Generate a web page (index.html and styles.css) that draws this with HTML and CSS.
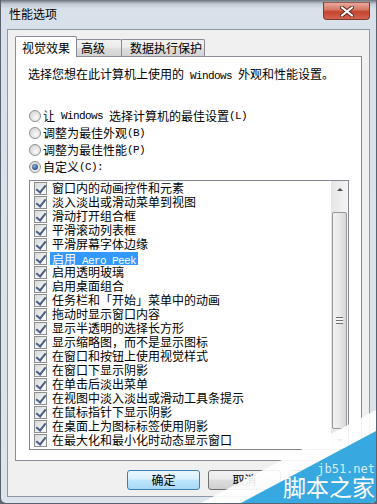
FILE: index.html
```html
<!DOCTYPE html>
<html lang="zh-CN">
<head>
    <meta charset="UTF-8">
    <meta name="viewport" content="width=device-width, initial-scale=1.0">
    <title>性能选项</title>
    <link rel="stylesheet" href="styles.css">
</head>
<body>
    <div class="window">
        <div class="titlebar">
            <span class="title">性能选项</span>
            <button class="close">
                <svg width="14" height="11" viewBox="0 0 14 11">
                    <path d="M2 1.5 L12 9.5 M12 1.5 L2 9.5" stroke="#5a2a22" stroke-width="4" stroke-linecap="round"/>
                    <path d="M2 1.5 L12 9.5 M12 1.5 L2 9.5" stroke="#fff" stroke-width="2.2" stroke-linecap="round"/>
                </svg>
            </button>
        </div>

        <div class="client">
            <div class="tabs">
                <div class="tab active">视觉效果</div>
                <div class="tab tab-adv">高级</div>
                <div class="tab tab-dep">数据执行保护</div>
            </div>

            <div class="panel">
                <p class="intro">选择您想在此计算机上使用的<span class="latin"> Windows </span>外观和性能设置。</p>

                <div class="radios">
                    <div class="radio"><span class="dot"></span>让<span class="latin"> Windows </span>选择计算机的最佳设置<span class="latin">(L)</span></div>
                    <div class="radio"><span class="dot"></span>调整为最佳外观<span class="latin">(B)</span></div>
                    <div class="radio"><span class="dot"></span>调整为最佳性能<span class="latin">(P)</span></div>
                    <div class="radio"><span class="dot on"></span>自定义<span class="latin">(C):</span></div>
                </div>

                <div class="listbox">
                    <ul class="items">
                        <li><span class="check"></span>窗口内的动画控件和元素</li>
                        <li><span class="check"></span>淡入淡出或滑动菜单到视图</li>
                        <li><span class="check"></span>滑动打开组合框</li>
                        <li><span class="check"></span>平滑滚动列表框</li>
                        <li><span class="check"></span>平滑屏幕字体边缘</li>
                        <li><span class="check"></span><span class="sel">启用<span class="latin"> Aero Peek</span></span></li>
                        <li><span class="check"></span>启用透明玻璃</li>
                        <li><span class="check"></span>启用桌面组合</li>
                        <li><span class="check"></span>任务栏和「开始」菜单中的动画</li>
                        <li><span class="check"></span>拖动时显示窗口内容</li>
                        <li><span class="check"></span>显示半透明的选择长方形</li>
                        <li><span class="check"></span>显示缩略图，而不是显示图标</li>
                        <li><span class="check"></span>在窗口和按钮上使用视觉样式</li>
                        <li><span class="check"></span>在窗口下显示阴影</li>
                        <li><span class="check"></span>在单击后淡出菜单</li>
                        <li><span class="check"></span>在视图中淡入淡出或滑动工具条提示</li>
                        <li><span class="check"></span>在鼠标指针下显示阴影</li>
                        <li><span class="check"></span>在桌面上为图标标签使用阴影</li>
                        <li><span class="check"></span>在最大化和最小化时动态显示窗口</li>
                    </ul>
                    <div class="scrollbar">
                        <div class="sb-btn"><span class="arrow-up"></span></div>
                        <div class="sb-gap"></div>
                        <div class="thumb"><span class="grip"></span></div>
                        <div class="sb-gap2"></div>
                        <div class="sb-btn"><span class="arrow-down"></span></div>
                    </div>
                </div>
            </div>

            <div class="buttons">
                <button class="btn default">确定</button>
                <button class="btn">取消</button>
                <!-- third button is hidden under the watermark -->
                <button class="btn"></button>
            </div>
        </div>

        <!-- site watermark in the corner -->
        <div class="watermark">
            <svg class="wm-bg" width="187" height="104" viewBox="0 0 187 104">
                <polygon points="187,9 187,104 8,104" fill="#fff" fill-opacity="0.9"/>
                <polygon points="187,30 187,104 48,104" fill="#38a8e0"/>
            </svg>
            <span class="wm-site">jb51.net</span>
            <span class="wm-name">脚本之家</span>
        </div>
    </div>
</body>
</html>
```

FILE: styles.css
```css
* {
    box-sizing: border-box;
}
body {
    margin: 0;
    font-family: "Noto Sans CJK SC", sans-serif;
    font-size: 12px;
    color: #000;
    background: #5d6772;
}
.latin {
    font-family: "Liberation Mono", monospace;
    font-size: 11px;
    letter-spacing: -0.6px;
    white-space: pre;
}
.window {
    position: relative;
    width: 377px;
    height: 504px;
    display: flex;
    flex-direction: column;
    padding: 0 6px 6px;
    background: linear-gradient(#6c737b, #c3ccd5 4px, #d8e1ea 9px, #dde4eb);
    border: 1px solid #5a636d;
    border-top: none;
    border-radius: 0 0 6px 6px;
    overflow: hidden;
}
.titlebar {
    height: 29px;
    display: flex;
    align-items: flex-start;
}
.title {
    margin: 6px 0 0 2px;
    line-height: 16px;
}
.close {
    margin: 2px 0 0 auto;
    width: 47px;
    height: 18px;
    padding: 0;
    border: 1px solid #7a3a30;
    border-top-color: #9a5a50;
    border-radius: 0 0 4px 4px;
    background: linear-gradient(#e9a99c, #d77a68 40%, #c5452f 55%, #d2634f);
    display: flex;
    align-items: center;
    justify-content: center;
}
.client {
    flex: 1;
    display: flex;
    flex-direction: column;
    padding: 6px 7px 0;
    background: #f0f0f0;
    border: 1px solid #8d99a5;
}
.tabs {
    height: 20px;
    display: flex;
    align-items: flex-end;
    position: relative;
    z-index: 1;
}
.tab {
    height: 17px;
    line-height: 16px;
    border: 1px solid #898c95;
    border-bottom: none;
    border-radius: 2px 2px 0 0;
    background: linear-gradient(#f3f3f3, #ebebeb 45%, #dddddd 55%, #d3d3d3);
    margin-left: -1px;
    white-space: nowrap;
}
.tab.active {
    width: 62px;
    height: 21px;
    margin: 0 0 -1px 0;
    padding-top: 3px;
    text-align: center;
    background: #fff;
}
.tab-adv {
    width: 46px;
    padding-left: 4px;
}
.tab-dep {
    width: 84px;
    padding-left: 8px;
}
.panel {
    height: 405px;
    padding: 10px 12px 0;
    background: #fff;
    border: 1px solid #898c95;
}
.intro {
    margin: 0;
    line-height: 14px;
}
.radios {
    margin-top: 24px;
    display: flex;
    flex-direction: column;
}
.radio {
    height: 17px;
    display: flex;
    align-items: center;
    white-space: nowrap;
}
.dot {
    width: 12px;
    height: 12px;
    margin: 0 2px 0 1px;
    border: 1px solid #8e8f8f;
    border-radius: 50%;
    background: radial-gradient(circle at 60% 65%, #fafafa, #dadada 70%);
    display: flex;
    align-items: center;
    justify-content: center;
}
.dot.on::after {
    content: "";
    width: 6px;
    height: 6px;
    border-radius: 50%;
    background: radial-gradient(circle at 40% 35%, #8ab0d8, #2c4f85 70%);
}
.listbox {
    margin: 5px 0 0 1px;
    width: 320px;
    height: 270px;
    display: flex;
    background: #fff;
    border: 1px solid #828790;
}
.items {
    flex: 1;
    list-style: none;
    margin: 0;
    padding: 0 0 0 4px;
}
.items li {
    height: 14px;
    display: flex;
    align-items: center;
    white-space: nowrap;
    line-height: 14px;
}
.check {
    position: relative;
    flex: none;
    width: 13px;
    height: 13px;
    margin-right: 5px;
    border: 1px solid #8e8f8f;
    background: linear-gradient(135deg, #d9d9d9, #f7f7f7 80%);
}
.check::after {
    content: "";
    position: absolute;
    left: 3px;
    top: 0;
    width: 4px;
    height: 8px;
    border: solid #4a5e8a;
    border-width: 0 2px 2px 0;
    transform: rotate(38deg);
}
.sel {
    height: 13px;
    line-height: 13px;
    margin-left: -2px;
    padding: 0 2px;
    color: #fff;
    background: #3399ff;
}
.scrollbar {
    width: 17px;
    display: flex;
    flex-direction: column;
    background: linear-gradient(90deg, #e6e6e6, #f4f4f4);
}
.sb-btn {
    height: 17px;
    display: flex;
    align-items: center;
    justify-content: center;
}
.arrow-up {
    border: 3px solid transparent;
    border-top: none;
    border-bottom: 3px solid #4d4d4d;
}
.arrow-down {
    border: 3px solid transparent;
    border-bottom: none;
    border-top: 3px solid #4d4d4d;
}
.sb-gap {
    height: 14px;
}
.sb-gap2 {
    height: 3px;
}
.thumb {
    height: 217px;
    margin: 0 1px;
    border: 1px solid #979797;
    border-radius: 2px;
    background: linear-gradient(90deg, #f4f4f4, #e8e8e8 50%, #d6d6d6);
    display: flex;
    align-items: center;
    justify-content: center;
}
.grip {
    width: 7px;
    height: 7px;
    background: repeating-linear-gradient(#6f6f6f 0 1px, #f4f4f4 1px 3px);
}
.buttons {
    display: flex;
    justify-content: flex-end;
    gap: 8px;
    margin-top: 9px;
}
.btn {
    width: 73px;
    height: 20px;
    padding: 0;
    font: inherit;
    line-height: 18px;
    border: 1px solid #707070;
    border-radius: 3px;
    background: linear-gradient(#f2f2f2, #ebebeb 45%, #dddddd 50%, #cfcfcf);
}
.btn.default {
    border-color: #3c7fb1;
    background: linear-gradient(#eaf6fd, #d9f0fc 45%, #bee6fd 50%, #a7d9f5);
}
.watermark {
    position: absolute;
    left: 190px;
    top: 400px;
    width: 187px;
    height: 104px;
    display: flex;
    flex-direction: column;
    align-items: flex-end;
    padding: 63px 3px 0 0;
}
.wm-bg {
    position: absolute;
    left: 0;
    top: 0;
}
.wm-site {
    position: relative;
    font-family: "DejaVu Sans Mono", monospace;
    font-size: 12px;
    line-height: 12px;
    color: #d6eefa;
}
.wm-name {
    position: relative;
    font-size: 23px;
    line-height: 23px;
    color: #fff;
}
```
